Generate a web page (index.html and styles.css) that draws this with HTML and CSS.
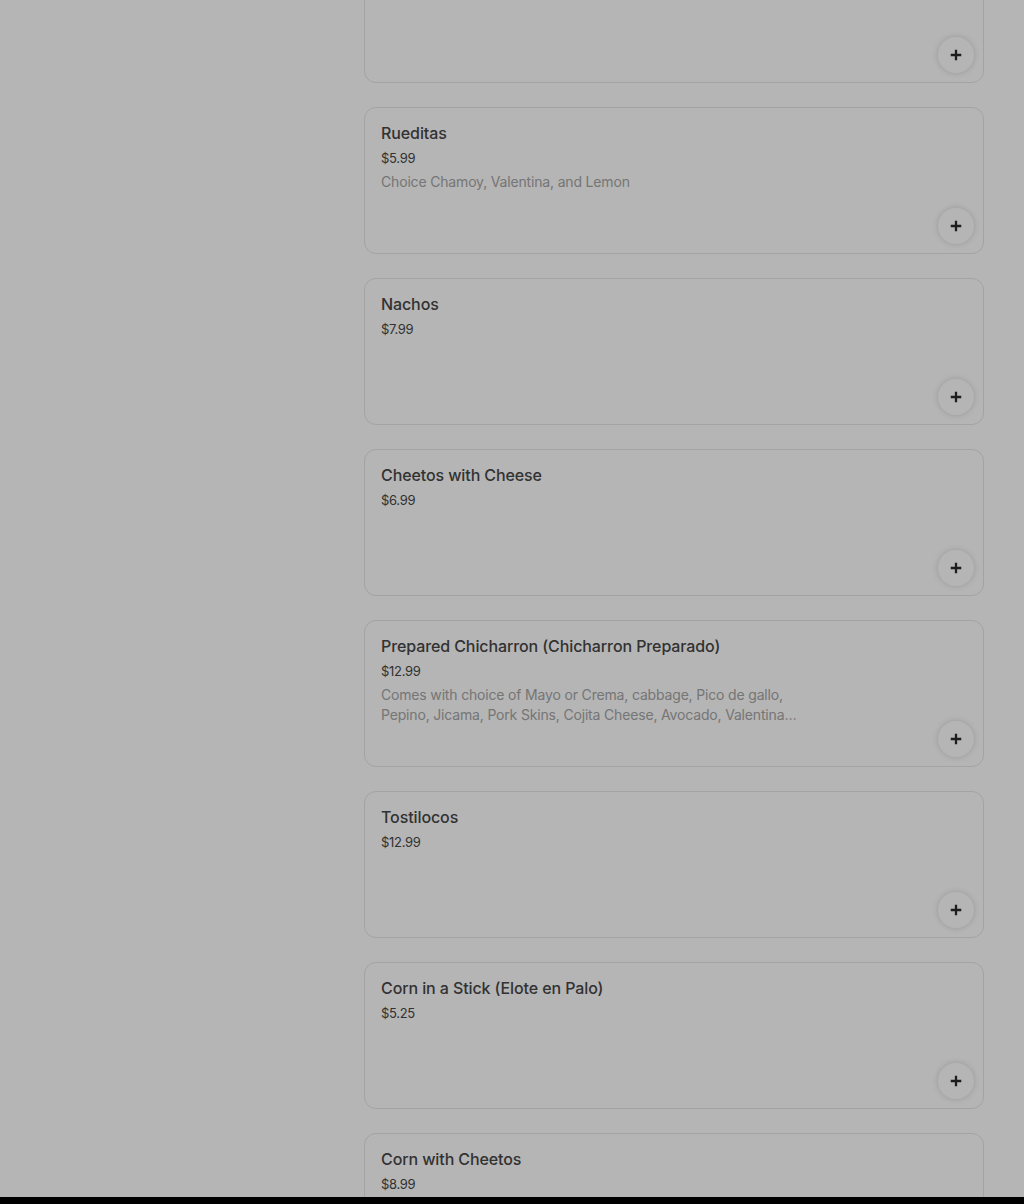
FILE: index.html
```html
<!DOCTYPE html>
<html lang="en">
<head>
  <meta charset="UTF-8">
  <title>Menu</title>
  <meta name="viewport" content="width=device-width, initial-scale=1.0">
  <link rel="stylesheet" href="styles.css">
</head>
<body>

  <div class="menu">
    <div class="item">
      <div class="item-info"></div>
      <button class="add" aria-label="Add">
        <svg viewBox="0 0 16 16" width="14" height="14"><path d="M8 2v12M2 8h12" stroke="currentColor" stroke-width="2.6"/></svg>
      </button>
    </div>

    <div class="item">
      <div class="item-info">
        <div class="name">Rueditas</div>
        <div class="price">$5.99</div>
        <div class="desc">Choice Chamoy, Valentina, and Lemon</div>
      </div>
      <button class="add" aria-label="Add">
        <svg viewBox="0 0 16 16" width="14" height="14"><path d="M8 2v12M2 8h12" stroke="currentColor" stroke-width="2.6"/></svg>
      </button>
    </div>

    <div class="item">
      <div class="item-info">
        <div class="name">Nachos</div>
        <div class="price">$7.99</div>
      </div>
      <button class="add" aria-label="Add">
        <svg viewBox="0 0 16 16" width="14" height="14"><path d="M8 2v12M2 8h12" stroke="currentColor" stroke-width="2.6"/></svg>
      </button>
    </div>

    <div class="item">
      <div class="item-info">
        <div class="name">Cheetos with Cheese</div>
        <div class="price">$6.99</div>
      </div>
      <button class="add" aria-label="Add">
        <svg viewBox="0 0 16 16" width="14" height="14"><path d="M8 2v12M2 8h12" stroke="currentColor" stroke-width="2.6"/></svg>
      </button>
    </div>

    <div class="item">
      <div class="item-info">
        <div class="name">Prepared Chicharron (Chicharron Preparado)</div>
        <div class="price">$12.99</div>
        <div class="desc">Comes with choice of Mayo or Crema, cabbage, Pico de gallo, Pepino, Jicama, Pork Skins, Cojita Cheese, Avocado, Valentina, Chamoy and Lemon</div>
      </div>
      <button class="add" aria-label="Add">
        <svg viewBox="0 0 16 16" width="14" height="14"><path d="M8 2v12M2 8h12" stroke="currentColor" stroke-width="2.6"/></svg>
      </button>
    </div>

    <div class="item">
      <div class="item-info">
        <div class="name">Tostilocos</div>
        <div class="price">$12.99</div>
      </div>
      <button class="add" aria-label="Add">
        <svg viewBox="0 0 16 16" width="14" height="14"><path d="M8 2v12M2 8h12" stroke="currentColor" stroke-width="2.6"/></svg>
      </button>
    </div>

    <div class="item">
      <div class="item-info">
        <div class="name">Corn in a Stick (Elote en Palo)</div>
        <div class="price">$5.25</div>
      </div>
      <button class="add" aria-label="Add">
        <svg viewBox="0 0 16 16" width="14" height="14"><path d="M8 2v12M2 8h12" stroke="currentColor" stroke-width="2.6"/></svg>
      </button>
    </div>

    <div class="item">
      <div class="item-info">
        <div class="name">Corn with Cheetos</div>
        <div class="price">$8.99</div>
      </div>
      <button class="add" aria-label="Add">
        <svg viewBox="0 0 16 16" width="14" height="14"><path d="M8 2v12M2 8h12" stroke="currentColor" stroke-width="2.6"/></svg>
      </button>
    </div>
  </div>

  <div class="dim"></div>
  <div class="bottom-bar"></div>

</body>
</html>
```

FILE: styles.css
```css
body {
  margin: 0;
  font-family: Inter, "Liberation Sans", sans-serif;
  background-color: #ffffff;
  color: #000000;
  height: 1204px;
  overflow: hidden;
}

.menu {
  display: flex;
  flex-direction: column;
  gap: 24px;
  width: 620px;
  margin: -64px 40px 0 364px;
}

.item {
  box-sizing: border-box;
  height: 147px;
  display: flex;
  flex-direction: column;
  padding: 13px 9px 9px 16px;
  border: 1px solid #e6e6e6;
  border-radius: 12px;
}

.item-info {
  flex: 1 1 auto;
  min-height: 0;
}

.name {
  font-size: 16px;
  line-height: 24px;
  font-weight: 500;
  letter-spacing: -0.1px;
  color: #474747;
}

.price {
  margin-top: 3px;
  font-size: 13px;
  line-height: 20px;
  letter-spacing: -0.3px;
  color: #474747;
}

.desc {
  margin-top: 4px;
  width: 416px;
  font-size: 14px;
  line-height: 20px;
  letter-spacing: -0.17px;
  color: #a6a6a6;
  display: -webkit-box;
  -webkit-line-clamp: 2;
  -webkit-box-orient: vertical;
  overflow: hidden;
}

.add {
  align-self: flex-end;
  flex: none;
  width: 36px;
  height: 36px;
  border: none;
  border-radius: 50%;
  background-color: #ffffff;
  color: #2a2a2a;
  box-shadow: 0 0 6px rgba(0, 0, 0, 0.16);
  display: flex;
  align-items: center;
  justify-content: center;
  padding: 0;
  cursor: pointer;
}

.dim {
  position: fixed;
  inset: 0;
  background: rgba(0, 0, 0, 0.29);
}

.bottom-bar {
  position: fixed;
  left: 0;
  right: 0;
  bottom: 0;
  height: 7px;
  background: #000000;
}
```
